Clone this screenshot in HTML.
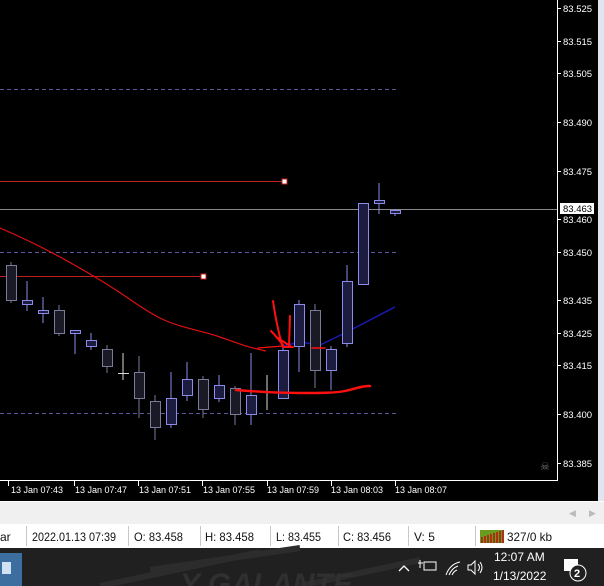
<!DOCTYPE html>
<html><head><meta charset="utf-8"><style>
html,body{margin:0;padding:0;width:604px;height:586px;overflow:hidden;background:#000;font-family:"Liberation Sans",sans-serif}
svg{position:absolute;left:0;top:0}
</style></head><body>
<svg width="604" height="586" viewBox="0 0 604 586" xmlns="http://www.w3.org/2000/svg" font-family="Liberation Sans, sans-serif">
<rect x="0" y="0" width="604" height="502" fill="#000"/>
<rect x="598" y="0" width="6" height="502" fill="#dfe6f0"/>
<g stroke="#5a5a9a" stroke-dasharray="4,3" stroke-width="1">
<line x1="0" y1="89.5" x2="397" y2="89.5"/>
<line x1="0" y1="252.5" x2="397" y2="252.5"/>
<line x1="0" y1="413.5" x2="397" y2="413.5"/>
</g>
<line x1="0" y1="209.5" x2="557" y2="209.5" stroke="#8a8a8a"/>
<line x1="0" y1="181.5" x2="284" y2="181.5" stroke="#c02020"/>
<rect x="282" y="179" width="5" height="5" fill="#fff" stroke="#c02020"/>
<line x1="0" y1="276.5" x2="204" y2="276.5" stroke="#c02020"/>
<rect x="201" y="274" width="5" height="5" fill="#fff" stroke="#c02020"/>
<path d="M0,228 C40,245 70,262 100,280 S140,308 160,318 S200,330 220,337 S250,348 266,351" stroke="#e01010" fill="none" stroke-width="1.2"/>
<path d="M283,346 L300,342 L320,345 L345,333 L370,320 L395,307" stroke="#1a1ab0" fill="none" stroke-width="1.5"/>
<g stroke-width="1">
<g stroke="#7a7a9a" fill="#1a1a26">
<line x1="11" y1="262" x2="11" y2="303"/><rect x="6.5" y="265.5" width="10" height="35"/>
<line x1="59" y1="305" x2="59" y2="336"/><rect x="54.5" y="310.5" width="10" height="23"/>
<line x1="107" y1="345" x2="107" y2="373"/><rect x="102.5" y="349.5" width="10" height="17"/>
<line x1="139" y1="356" x2="139" y2="418"/><rect x="134.5" y="372.5" width="10" height="26"/>
<line x1="155" y1="395" x2="155" y2="440"/><rect x="150.5" y="401.5" width="10" height="26"/>
<line x1="203" y1="376" x2="203" y2="418"/><rect x="198.5" y="379.5" width="10" height="30"/>
<line x1="235" y1="386" x2="235" y2="425"/><rect x="230.5" y="388.5" width="10" height="26"/>
<line x1="315" y1="304" x2="315" y2="388"/><rect x="310.5" y="310.5" width="10" height="60"/>
</g>
<g stroke="#8c8ce8" fill="#1c1c40">
<line x1="27" y1="281" x2="27" y2="311"/><rect x="22.5" y="300.5" width="10" height="4"/>
<line x1="43" y1="297" x2="43" y2="323"/><rect x="38.5" y="310.5" width="10" height="3"/>
<line x1="75" y1="330" x2="75" y2="354"/><rect x="70.5" y="330.5" width="10" height="3"/>
<line x1="91" y1="333" x2="91" y2="350"/><rect x="86.5" y="340.5" width="10" height="6"/>
<line x1="171" y1="372" x2="171" y2="428"/><rect x="166.5" y="398.5" width="10" height="26"/>
<line x1="187" y1="362" x2="187" y2="401"/><rect x="182.5" y="379.5" width="10" height="16"/>
<line x1="219" y1="375" x2="219" y2="402"/><rect x="214.5" y="385.5" width="10" height="13"/>
<line x1="251" y1="353" x2="251" y2="425"/><rect x="246.5" y="395.5" width="10" height="19"/>
<line x1="283" y1="345" x2="283" y2="398"/><rect x="278.5" y="350.5" width="10" height="48"/>
<line x1="299" y1="300" x2="299" y2="372"/><rect x="294.5" y="304.5" width="10" height="42"/>
<line x1="331" y1="346" x2="331" y2="390"/><rect x="326.5" y="349.5" width="10" height="21"/>
<line x1="347" y1="265" x2="347" y2="347"/><rect x="342.5" y="281.5" width="10" height="62"/>
<line x1="363" y1="203" x2="363" y2="285"/><rect x="358.5" y="203.5" width="10" height="81"/>
<line x1="379" y1="183" x2="379" y2="214"/><rect x="374.5" y="200.5" width="10" height="3"/>
<line x1="395" y1="209" x2="395" y2="216"/><rect x="390.5" y="210.5" width="10" height="3"/>
</g>
<g stroke="#d8d8d8">
<line x1="123" y1="353" x2="123" y2="380"/><line x1="118" y1="373.5" x2="129" y2="373.5"/>
<line x1="267" y1="375" x2="267" y2="410"/><line x1="262" y1="392.5" x2="272" y2="392.5"/>
</g>
</g>
<g stroke="#ff1010" fill="none" stroke-width="2" stroke-linecap="round">
<path d="M273,301 C275,315 278,330 282,345 M271,331 C276,336 279,340 283,345 M278,338 L290,346 M290,316 L289,347 M283,347 L293,347"/>
<path d="M236,390 C260,392 280,393 300,393 S335,393 345,391 S360,386 370,386" stroke-width="2.4"/>
<path d="M258,348 L283,346" stroke-width="1.2"/>
<path d="M312,348 L325,348" stroke-width="1.5"/>
</g>
<line x1="557.5" y1="0" x2="557.5" y2="481" stroke="#fff"/>
<line x1="0" y1="480.5" x2="558" y2="480.5" stroke="#fff"/>
<g fill="#fff" font-size="9.5">
<g stroke="#fff"><line x1="557" y1="8.5" x2="561" y2="8.5"/><line x1="557" y1="41.5" x2="561" y2="41.5"/><line x1="557" y1="73.5" x2="561" y2="73.5"/><line x1="557" y1="122.5" x2="561" y2="122.5"/><line x1="557" y1="171.5" x2="561" y2="171.5"/><line x1="557" y1="219.5" x2="561" y2="219.5"/><line x1="557" y1="252.5" x2="561" y2="252.5"/><line x1="557" y1="300.5" x2="561" y2="300.5"/><line x1="557" y1="333.5" x2="561" y2="333.5"/><line x1="557" y1="365.5" x2="561" y2="365.5"/><line x1="557" y1="414.5" x2="561" y2="414.5"/><line x1="557" y1="463.5" x2="561" y2="463.5"/></g>
<text x="563" y="12">83.525</text><text x="563" y="45">83.515</text><text x="563" y="77">83.505</text><text x="563" y="126">83.490</text><text x="563" y="175">83.475</text>
<text x="563" y="256">83.450</text><text x="563" y="304">83.435</text><text x="563" y="337">83.425</text><text x="563" y="369">83.415</text><text x="563" y="418">83.400</text><text x="563" y="467">83.385</text>
<rect x="560" y="203" width="34" height="11" fill="#fff"/>
<text x="563" y="212" fill="#000">83.463</text>
<text x="563" y="223">83.460</text>
</g>
<text x="540" y="470" fill="#777" font-size="11">☠</text>
<g fill="#fff" font-size="9">
<g stroke="#fff"><line x1="8.5" y1="481" x2="8.5" y2="486"/><line x1="74.5" y1="481" x2="74.5" y2="486"/><line x1="138.5" y1="481" x2="138.5" y2="486"/><line x1="202.5" y1="481" x2="202.5" y2="486"/><line x1="267.5" y1="481" x2="267.5" y2="486"/><line x1="331.5" y1="481" x2="331.5" y2="486"/><line x1="395.5" y1="481" x2="395.5" y2="486"/></g>
<text x="11" y="493">13 Jan 07:43</text><text x="75" y="493">13 Jan 07:47</text><text x="139" y="493">13 Jan 07:51</text><text x="203" y="493">13 Jan 07:55</text><text x="267" y="493">13 Jan 07:59</text><text x="331" y="493">13 Jan 08:03</text><text x="395" y="493">13 Jan 08:07</text>
</g>
<rect x="0" y="502" width="604" height="22" fill="#f0f0f0"/>
<line x1="0" y1="501.5" x2="604" y2="501.5" stroke="#fff"/>
<text x="569" y="516" fill="#bbb" font-size="9">◀</text><text x="589" y="516" fill="#bbb" font-size="9">▶</text>
<rect x="0" y="524" width="604" height="24" fill="#fff"/>
<g stroke="#c8c8c8"><line x1="26.5" y1="526" x2="26.5" y2="546"/><line x1="128.5" y1="526" x2="128.5" y2="546"/><line x1="200.5" y1="526" x2="200.5" y2="546"/><line x1="270.5" y1="526" x2="270.5" y2="546"/><line x1="338.5" y1="526" x2="338.5" y2="546"/><line x1="408.5" y1="526" x2="408.5" y2="546"/><line x1="475.5" y1="526" x2="475.5" y2="546"/></g>
<g fill="#111" font-size="12" textLength="">
<text x="0" y="541">ar</text><text x="32" y="541" textLength="84" lengthAdjust="spacingAndGlyphs">2022.01.13 07:39</text><text x="134" y="541" textLength="49" lengthAdjust="spacingAndGlyphs">O: 83.458</text><text x="205" y="541" textLength="49" lengthAdjust="spacingAndGlyphs">H: 83.458</text><text x="276" y="541" textLength="45" lengthAdjust="spacingAndGlyphs">L: 83.455</text><text x="343" y="541" textLength="48" lengthAdjust="spacingAndGlyphs">C: 83.456</text><text x="414" y="541">V: 5</text><text x="507" y="541" textLength="45" lengthAdjust="spacingAndGlyphs">327/0 kb</text>
</g>
<g><rect x="480" y="530" width="24" height="13" fill="#6a9a20"/>
<g stroke="#c01010" stroke-width="1.5"><line x1="482" y1="543" x2="482" y2="537"/><line x1="485" y1="543" x2="485" y2="536"/><line x1="488" y1="543" x2="488" y2="535"/><line x1="491" y1="543" x2="491" y2="534"/><line x1="494" y1="543" x2="494" y2="533"/><line x1="497" y1="543" x2="497" y2="532"/><line x1="500" y1="543" x2="500" y2="531"/><line x1="503" y1="543" x2="503" y2="530"/></g></g>
<rect x="0" y="548" width="604" height="38" fill="#202020"/>
<path d="M100,586 L260,552 M300,586 L420,560 M150,570 L300,548" stroke="#2c2c2c" stroke-width="6"/>
<text x="180" y="594" fill="#303030" font-size="30" font-style="italic" font-weight="bold">Y GALANTE</text>
<rect x="0" y="553" width="22" height="33" fill="#3c6fa0"/>
<rect x="2" y="562" width="9" height="12" fill="#cfe2f5"/>
<g fill="#fff" font-size="12">
<path d="M399,571 L404,566 L409,571" stroke="#fff" fill="none" stroke-width="1.3"/>
<rect x="424" y="562" width="12" height="8" fill="none" stroke="#fff"/><path d="M420,560 L420,568 M418,563 L423,563" stroke="#fff"/>
<path d="M446,575 Q450,564 460,562 M449,575 Q452,568 458,566 M452,575 Q454,571 457,570" stroke="#fff" fill="none"/>
<path d="M468,565 L471,565 L475,561 L475,574 L471,570 L468,570 Z" stroke="#fff" fill="none"/><path d="M478,564 Q481,567.5 478,571 M480,562 Q484,567.5 480,573" stroke="#fff" fill="none"/>
<text x="494" y="561">12:07 AM</text>
<text x="493" y="580">1/13/2022</text>
<rect x="564" y="559" width="14" height="12" fill="#fff"/>
<circle cx="578" cy="573" r="8" fill="#202020" stroke="#fff"/>
<text x="574" y="577" font-size="11" font-weight="bold">2</text>
</g>
</svg>
</body></html>
